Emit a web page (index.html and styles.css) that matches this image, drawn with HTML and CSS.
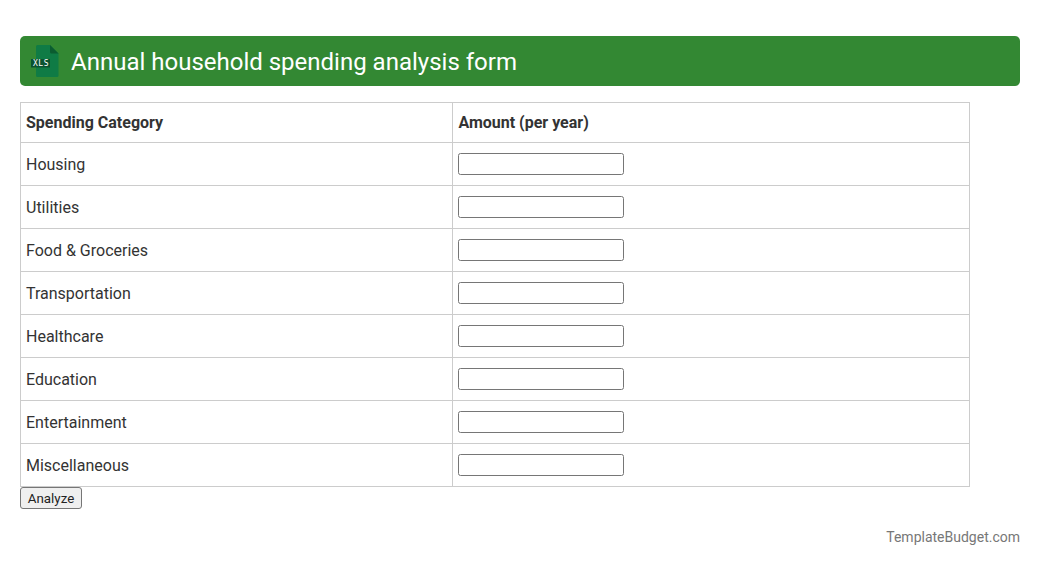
FILE: index.html
```html
<!DOCTYPE html>
<html lang="en">
<head>
<meta charset="utf-8">
<title>Annual household spending analysis form</title>
<link rel="stylesheet" href="styles.css">
</head>
<body>
<main class="page">
  <header class="banner">
    <svg class="file-icon" width="32" height="32" viewBox="0 0 32 32" aria-hidden="true">
      <path d="M6 1.500A1.500 1.500 0 0 1 7.500 0H20l8.500 8.500v22a1.500 1.500 0 0 1-1.500 1.500H7.500A1.500 1.500 0 0 1 6 30.500z" fill="#0f7b45"/>
      <path d="M20 0l8.500 8.500h-7A1.500 1.500 0 0 1 20 7z" fill="#0b5c30"/>
      <rect x="1" y="14" width="19" height="8.500" fill="#0a5230"/>
      <text x="11" y="21" class="file-label">XLS</text>
    </svg>
    <h1 class="title">Annual household spending analysis form</h1>
  </header>
  <form>
    <table class="sheet">
      <thead>
        <tr><th class="col-a">Spending Category</th><th>Amount (per year)</th></tr>
      </thead>
      <tbody>
        <tr><td>Housing</td><td><input type="text" class="amount"></td></tr>
        <tr><td>Utilities</td><td><input type="text" class="amount"></td></tr>
        <tr><td>Food &amp; Groceries</td><td><input type="text" class="amount"></td></tr>
        <tr><td>Transportation</td><td><input type="text" class="amount"></td></tr>
        <tr><td>Healthcare</td><td><input type="text" class="amount"></td></tr>
        <tr><td>Education</td><td><input type="text" class="amount"></td></tr>
        <tr><td>Entertainment</td><td><input type="text" class="amount"></td></tr>
        <tr><td>Miscellaneous</td><td><input type="text" class="amount"></td></tr>
      </tbody>
    </table>
    <button type="button" class="analyze">Analyze</button>
  </form>
  <footer class="credit">TemplateBudget.com</footer>
</main>
</body>
</html>
```
FILE: styles.css
```css
* { box-sizing: border-box; }
html, body { margin: 0; padding: 0; background: #fff; }
body { font-family: Roboto, "Liberation Sans", sans-serif; font-size: 16px; color: #333; }
.page { width: 1000px; margin: 0 20px; padding-top: 36px; }
.banner {
  display: flex; align-items: center; height: 50px; padding-left: 10px; gap: 9px;
  background: #338833; border-radius: 5px; margin-bottom: 16px;
}
.file-icon { flex: none; }
.file-label { font-family: "DejaVu Sans Mono", monospace; font-size: 8px; font-weight: 400; letter-spacing: 0.500px; fill: #fff; text-anchor: middle; }
.title { margin: 2px 0 0; font-size: 24px; font-weight: 400; color: #fff; line-height: 28px; }
.sheet { width: 950px; border-collapse: collapse; table-layout: fixed; }
.sheet th, .sheet td { border: 1px solid #ccc; padding: 10px 5px; text-align: left; line-height: 19px; }
.sheet th { font-weight: 700; }
.sheet td { height: 43px; }
.col-a { width: 432.400px; }
.amount {
  display: block; width: 166px; height: 22px; padding: 1px 2px; margin: 0;
  border: 1px solid #767676; border-radius: 2.500px; background: #fff;
  font-family: Roboto, sans-serif; font-size: 13.333px;
}
.analyze {
  display: block; width: 62px; height: 22px; padding: 1px 6px; margin: 0;
  border: 1px solid #767676; border-radius: 3px; background: #efefef; color: #222;
  font-family: Roboto, sans-serif; font-size: 13.333px;
}
.credit { margin-top: 18px; text-align: right; font-size: 14px; line-height: 20px; color: #777; }
```
